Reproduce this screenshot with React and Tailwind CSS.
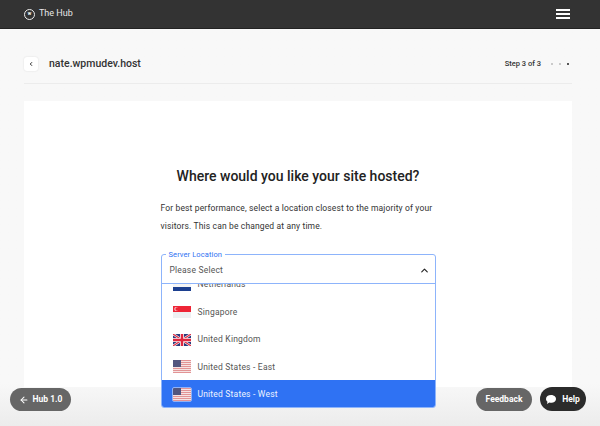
import { ChevronLeft, ChevronUp, ArrowLeft } from 'lucide-react';

const font = { fontFamily: 'Roboto, sans-serif' };

function FlagNL() {
  return (
    <svg width="18" height="12" viewBox="0 0 18 12" className="block">
      <rect width="18" height="4" fill="#c8202f" />
      <rect y="4" width="18" height="4" fill="#f5f5f5" />
      <rect y="8" width="18" height="4" fill="#1c3f8f" />
    </svg>
  );
}

function FlagSG() {
  return (
    <svg width="18" height="12" viewBox="0 0 18 12" className="block">
      <rect width="18" height="6" fill="#ee2536" />
      <rect y="6" width="18" height="6" fill="#eef0f2" />
      <circle cx="3.2" cy="3" r="1.9" fill="#fbe3e5" />
      <circle cx="4" cy="3" r="1.7" fill="#ee2536" />
    </svg>
  );
}

function FlagUK() {
  return (
    <svg width="18" height="12" viewBox="0 0 18 12" className="block">
      <rect width="18" height="12" fill="#2b3a7c" />
      <path d="M0 0L18 12M18 0L0 12" stroke="#f4f4f4" strokeWidth="2.4" />
      <path d="M0 0L18 12M18 0L0 12" stroke="#e0263f" strokeWidth="1.1" />
      <path d="M9 0V12M0 6H18" stroke="#f4f4f4" strokeWidth="4" />
      <path d="M9 0V12M0 6H18" stroke="#e0263f" strokeWidth="2.4" />
    </svg>
  );
}

function FlagUS() {
  const stripes = [0, 2, 4, 6, 8, 10, 12];
  return (
    <svg width="18" height="13" viewBox="0 0 18 13" className="block">
      <rect width="18" height="13" fill="#f6e3e3" />
      {stripes.map((y) => (
        <rect key={y} y={y} width="18" height="1" fill="#e29495" />
      ))}
      <rect width="8" height="7" fill="#53567f" />
    </svg>
  );
}

function Row({ flag, label, active }) {
  return (
    <div className={`flex items-center h-[27.4px] shrink-0 pl-[11px] pt-[2px] gap-[7px] text-[8.5px] tracking-[0.2px] ${active ? 'bg-[#2f72f3] text-[#eef4ff]' : 'bg-white text-[#555]'}`}>
      <div className={active ? 'outline outline-1 outline-[#8fb2f8] rounded-[1px]' : ''}>{flag}</div>
      <span>{label}</span>
    </div>
  );
}

export default function App() {
  return (
    <div style={font} className="relative w-[600px] h-[426px] overflow-hidden flex flex-col bg-gradient-to-b from-[#f8f8f8] from-[90%] to-[#ececec]">
      {/* Top bar */}
      <header className="h-[29px] shrink-0 bg-[#333] border-b border-[#222] flex items-center justify-between pl-[24px] pr-[30px]">
        <div className="flex items-center gap-[4px]">
          <div className="w-[11px] h-[11px] rounded-full border-[1.5px] border-[#eee] flex items-center justify-center text-[4px] font-bold text-white leading-none">W</div>
          <span className="text-[9px] text-[#e8e8e8]">The Hub</span>
        </div>
        <div className="flex flex-col gap-[2.5px] w-[14px]">
          <div className="h-[1.5px] bg-white" />
          <div className="h-[1.5px] bg-white" />
          <div className="h-[1.5px] bg-white" />
        </div>
      </header>

      {/* Site title row */}
      <div className="w-[548px] ml-[24px] mt-[28px] h-[27px] shrink-0 border-b border-[#ececec] flex items-start justify-between pr-[3px]">
        <div className="flex items-center gap-[11px] h-[14px]">
          <div className="w-[14px] h-[14px] bg-white rounded-[3px] shadow-[0_0_2px_rgba(0,0,0,0.12)] flex items-center justify-center">
            <ChevronLeft size={6} strokeWidth={4} color="#333" />
          </div>
          <span className="text-[10.5px] font-medium text-[#333]">nate.wpmudev.host</span>
        </div>
        <div className="flex items-center h-[14px] gap-[10px]">
          <span className="text-[7.5px] font-medium text-[#333]">Step 3 of 3</span>
          <div className="flex items-center gap-[6px]">
            <div className="w-[2px] h-[2px] rounded-full bg-[#bbb]" />
            <div className="w-[2px] h-[2px] rounded-full bg-[#bbb]" />
            <div className="w-[2px] h-[2px] rounded-full bg-[#222]" />
          </div>
        </div>
      </div>

      {/* Card */}
      <main className="w-[548px] ml-[24px] mt-[17px] h-[286px] shrink-0 bg-white flex flex-col items-center pt-[65px]">
        <h1 className="text-[14px] leading-[20px] font-medium text-[#222]">Where would you like your site hosted?</h1>
        <p className="w-[275px] mt-[13px] text-[8.5px] leading-[18px] text-[#333] tracking-[0.14px]">
          For best performance, select a location closest to the majority of your visitors. This can be changed at any time.
        </p>

        {/* Select, open */}
        <div className="relative w-[275px] mt-[19px] h-[154px] shrink-0 flex flex-col bg-white border border-[#8db4fb] rounded-[3px] z-10">
          <span className="absolute -top-[5px] left-[4px] px-[3px] bg-white text-[7.5px] leading-[10px] text-[#2f72f3] tracking-[0.1px]">Server Location</span>
          <div className="h-[29px] shrink-0 border-b border-[#8db4fb] flex items-center justify-between pl-[8px] pr-[5px] pt-[2px] text-[8.5px] text-[#555] tracking-[0.2px]">
            <span>Please Select</span>
            <ChevronUp size={11} strokeWidth={2.5} color="#222" />
          </div>
          <div className="flex-1 min-h-0 overflow-hidden flex flex-col justify-end rounded-b-[2px]">
            <Row flag={<FlagNL />} label="Netherlands" />
            <Row flag={<FlagSG />} label="Singapore" />
            <Row flag={<FlagUK />} label="United Kingdom" />
            <Row flag={<FlagUS />} label="United States - East" />
            <Row flag={<FlagUS />} label="United States - West" active />
          </div>
        </div>
      </main>

      {/* Floating buttons */}
      <button className="absolute left-[10px] top-[388px] h-[23px] w-[61px] rounded-full bg-[#666] flex items-center justify-center gap-[4px] text-[8.5px] font-bold text-white">
        <ArrowLeft size={10} strokeWidth={2.5} />
        <span>Hub 1.0</span>
      </button>
      <button className="absolute left-[476px] top-[388px] h-[23px] w-[56px] rounded-full bg-[#666] flex items-center justify-center text-[8.5px] font-bold text-white">
        Feedback
      </button>
      <button className="absolute left-[540px] top-[387px] h-[24px] w-[46px] rounded-full bg-[#2b2b2b] flex items-center justify-center gap-[6px] text-[8.5px] font-bold text-white">
        <svg width="10" height="9" viewBox="0 0 10 9" className="block">
          <path d="M5 0C2.2 0 0 1.7 0 3.9C0 5 .6 6 1.5 6.7L.9 9L3.4 7.6C3.9 7.7 4.5 7.8 5 7.8C7.8 7.8 10 6 10 3.9C10 1.7 7.8 0 5 0Z" fill="#fff" />
        </svg>
        <span>Help</span>
      </button>
    </div>
  );
}
